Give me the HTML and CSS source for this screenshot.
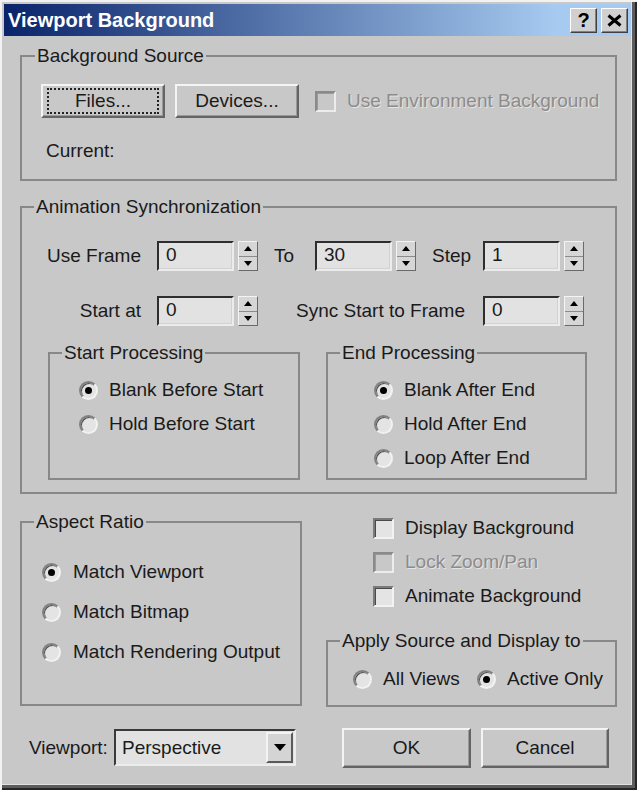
FILE: index.html
```html
<!DOCTYPE html>
<html>
<head>
<meta charset="utf-8">
<title>Viewport Background</title>
<link rel="stylesheet" href="styles.css">
</head>
<body>
<div class="window">
  <div class="titlebar">
    <span class="title">Viewport Background</span>
    <div class="tbtns">
      <span class="tbtn">?</span>
      <span class="tbtn"><svg width="15" height="13" viewBox="0 0 15 13"><path d="M1.5 1.5 L13.5 11.5 M13.5 1.5 L1.5 11.5" stroke="#000" stroke-width="3" fill="none"/></svg></span>
    </div>
  </div>

  <div class="content">
    <fieldset class="grp src">
      <legend class="lg-src">Background Source</legend>
      <div class="srcrow">
        <button class="btn files"><span class="focus">Files...</span></button>
        <button class="btn devices">Devices...</button>
        <div class="chk disabled env"><span class="box"></span><span>Use Environment Background</span></div>
      </div>
      <div class="current">Current:</div>
    </fieldset>

    <fieldset class="grp anim">
      <legend>Animation Synchronization</legend>
      <div class="srow row1">
        <span class="lbl lead">Use Frame</span>
        <div class="edit">0</div>
        <div class="arrows"><span class="up"></span><span class="dn"></span></div>
        <span class="lbl to">To</span>
        <div class="edit">30</div>
        <div class="arrows"><span class="up"></span><span class="dn"></span></div>
        <span class="lbl step">Step</span>
        <div class="edit">1</div>
        <div class="arrows"><span class="up"></span><span class="dn"></span></div>
      </div>
      <div class="srow row2">
        <span class="lbl lead">Start at</span>
        <div class="edit">0</div>
        <div class="arrows"><span class="up"></span><span class="dn"></span></div>
        <span class="lbl sync">Sync Start to Frame</span>
        <div class="edit">0</div>
        <div class="arrows"><span class="up"></span><span class="dn"></span></div>
      </div>
      <div class="procrow">
        <fieldset class="grp proc start">
          <legend>Start Processing</legend>
          <div class="opts">
            <div class="opt"><span class="radio on"></span><span>Blank Before Start</span></div>
            <div class="opt"><span class="radio"></span><span>Hold Before Start</span></div>
          </div>
        </fieldset>
        <fieldset class="grp proc end">
          <legend>End Processing</legend>
          <div class="opts">
            <div class="opt"><span class="radio on"></span><span>Blank After End</span></div>
            <div class="opt"><span class="radio"></span><span>Hold After End</span></div>
            <div class="opt"><span class="radio"></span><span>Loop After End</span></div>
          </div>
        </fieldset>
      </div>
    </fieldset>

    <div class="bottom">
      <div class="leftcol">
        <fieldset class="grp aspect">
          <legend>Aspect Ratio</legend>
          <div class="opts">
            <div class="opt tall"><span class="radio on"></span><span>Match Viewport</span></div>
            <div class="opt tall"><span class="radio"></span><span>Match Bitmap</span></div>
            <div class="opt tall"><span class="radio"></span><span>Match Rendering Output</span></div>
          </div>
        </fieldset>
        <div class="vprow">
          <span class="vplbl">Viewport:</span>
          <div class="combo">
            <span class="val">Perspective</span>
            <span class="ddbtn"><span class="tri"></span></span>
          </div>
        </div>
      </div>
      <div class="rightcol">
        <div class="chks">
          <div class="chk"><span class="box"></span><span>Display Background</span></div>
          <div class="chk disabled"><span class="box"></span><span>Lock Zoom/Pan</span></div>
          <div class="chk"><span class="box"></span><span>Animate Background</span></div>
        </div>
        <fieldset class="grp apply">
          <legend>Apply Source and Display to</legend>
          <div class="applyrow">
            <div class="opt allv"><span class="radio"></span><span>All Views</span></div>
            <div class="opt"><span class="radio on"></span><span>Active Only</span></div>
          </div>
        </fieldset>
        <div class="btnrow">
          <button class="btn ok">OK</button>
          <button class="btn cancel">Cancel</button>
        </div>
      </div>
    </div>
  </div>
</div>
</body>
</html>
```

FILE: styles.css
```css
* { box-sizing: border-box; }

body {
  margin: 0;
  background: #c8c8c8;
  font-family: "Liberation Sans", Arial, sans-serif;
  font-size: 19px;
  line-height: 22px;
  color: #1a1a1a;
}

.window {
  width: 637px;
  height: 790px;
  padding: 4px 6px 6px 4px;
  background: #c8c8c8;
  box-shadow: inset 2px 2px 0 #f2f2f2, inset -2px -2px 0 #262626, inset -5px -5px 0 #5c5c5c, inset -6px -6px 0 #e2e2e2;
}

/* title bar */
.titlebar {
  height: 32px;
  display: flex;
  align-items: center;
  padding: 0 3px 0 4px;
  background: linear-gradient(90deg, #0a246a 0%, #a6caf0 88%, #a6caf0 100%);
}
.title {
  color: #fff;
  font-weight: bold;
  font-size: 20px;
}
.tbtns {
  margin-left: auto;
  display: flex;
  gap: 4px;
}
.tbtn {
  width: 27px;
  height: 25px;
  display: flex;
  align-items: center;
  justify-content: center;
  background: #d0d0d0;
  border: 1px solid;
  border-color: #ffffff #404040 #404040 #ffffff;
  box-shadow: inset -1px -1px 0 #808080;
  font-weight: bold;
  font-size: 20px;
  color: #000;
}

/* content */
.content {
  padding: 0 14px 0 16px;
}

fieldset {
  margin: 0;
  padding: 0;
  min-width: 0;
  border: 2px solid #888888;
}
legend {
  margin-left: 12px;
  padding: 0 2px;
  line-height: 22px;
}
.lg-src { margin-left: 13px; }

/* buttons */
.btn {
  font: inherit;
  color: inherit;
  padding: 0;
  background: #c8c8c8;
  border: 2px solid;
  border-color: #f4f4f4 #646464 #646464 #f4f4f4;
  box-shadow: inset -1px -1px 0 #9a9a9a;
  display: flex;
  align-items: center;
  justify-content: center;
}

/* background source */
.src { margin-top: 9px; padding-bottom: 17px; }
.srcrow {
  display: flex;
  align-items: center;
  margin-top: 17px;
  padding-left: 19px;
}
.files, .devices { width: 124px; height: 34px; }
.devices { margin-left: 10px; }
.files .focus {
  width: 110px;
  height: 24px;
  display: flex;
  align-items: center;
  justify-content: center;
  outline: 2px dotted #222;
  outline-offset: -1px;
}
.env { margin-left: 16px; }
.current {
  margin-top: 22px;
  padding-left: 24px;
}

/* checkbox */
.chk {
  display: flex;
  align-items: center;
  gap: 11px;
  height: 34px;
}
.box {
  flex: none;
  width: 21px;
  height: 21px;
  background: #e4e4e4;
  border: 2px solid;
  border-color: #7a7a7a #f2f2f2 #f2f2f2 #7a7a7a;
  box-shadow: inset 1px 1px 0 #4a4a4a;
}
.disabled { color: #8c8c8c; text-shadow: 1px 1px 0 #e4e4e4; }
.disabled .box {
  background: #c8c8c8;
  border-color: #8a8a8a #ececec #ececec #8a8a8a;
  box-shadow: inset 1px 1px 0 #9a9a9a;
}

/* animation sync */
.anim { margin-top: 15px; padding-bottom: 12px; }
.srow {
  display: flex;
  align-items: center;
  height: 30px;
}
.row1 { margin-top: 23px; }
.row2 { margin-top: 25px; }
.lbl { flex: none; }
.lead { width: 119px; text-align: right; margin-right: 16px; }
.to { width: 57px; padding-left: 16px; }
.step { width: 67px; padding-left: 16px; }
.sync { width: 225px; text-align: right; padding-right: 18px; }

.edit {
  flex: none;
  width: 77px;
  height: 30px;
  padding-left: 7px;
  line-height: 23px;
  background: #e2e2e2;
  border: 2px solid;
  border-color: #2e2e2e #ececec #ececec #2e2e2e;
  box-shadow: inset -1px -1px 0 #d2d2d2;
}
.arrows {
  flex: none;
  width: 20px;
  height: 30px;
  margin-left: 4px;
  display: flex;
  flex-direction: column;
  background: #d6d6d6;
  border: 1px solid;
  border-color: #f4f4f4 #6a6a6a #6a6a6a #f4f4f4;
}
.arrows span {
  flex: 1;
  display: flex;
  align-items: center;
  justify-content: center;
}
.arrows .up { border-bottom: 1px solid #8a8a8a; }
.arrows .up::after {
  content: "";
  border-left: 4px solid transparent;
  border-right: 4px solid transparent;
  border-bottom: 5px solid #000;
}
.arrows .dn::after {
  content: "";
  border-left: 4px solid transparent;
  border-right: 4px solid transparent;
  border-top: 5px solid #000;
}

.procrow {
  display: flex;
  margin-top: 16px;
  padding-left: 26px;
}
.proc.start { width: 252px; }
.proc.end { width: 261px; margin-left: 26px; }
.proc .opts { padding: 9px 0 3px 29px; }
.proc.end .opts { padding-left: 46px; }

.opt {
  display: flex;
  align-items: center;
  gap: 11px;
  height: 34px;
}
.opt.tall { height: 40px; gap: 12px; }

.radio {
  flex: none;
  width: 19px;
  height: 19px;
  border-radius: 50%;
  background: #e4e4e4;
  border: 2px solid;
  border-color: #808080 #f2f2f2 #f2f2f2 #808080;
  box-shadow: inset 1px 1px 0 #505050;
  display: flex;
  align-items: center;
  justify-content: center;
}
.radio.on::after {
  content: "";
  width: 7px;
  height: 7px;
  border-radius: 50%;
  background: #000;
}

/* bottom area */
.bottom {
  display: flex;
  margin-top: 17px;
}
.leftcol { width: 282px; flex: none; }
.rightcol { width: 291px; flex: none; margin-left: 24px; }

.aspect .opts { padding: 19px 0 32px 20px; }

.vprow {
  display: flex;
  align-items: center;
  height: 37px;
  margin-top: 23px;
  padding-left: 9px;
}
.vplbl { width: 85px; flex: none; }
.combo {
  width: 182px;
  height: 37px;
  display: flex;
  align-items: center;
  padding-left: 6px;
  background: #e2e2e2;
  border: 2px solid;
  border-color: #3a3a3a #ececec #ececec #3a3a3a;
}
.combo .val { flex: 1; }
.ddbtn {
  width: 27px;
  height: 31px;
  margin-right: 1px;
  display: flex;
  align-items: center;
  justify-content: center;
  background: #d4d4d4;
  border: 2px solid;
  border-color: #f4f4f4 #5a5a5a #5a5a5a #f4f4f4;
}
.tri {
  border-left: 6px solid transparent;
  border-right: 6px solid transparent;
  border-top: 7px solid #000;
}

.chks { padding-left: 47px; }
.apply { margin-top: 17px; padding-bottom: 9px; }
.applyrow {
  display: flex;
  margin-top: 10px;
  padding-left: 25px;
}
.allv { width: 124px; }

.btnrow {
  display: flex;
  margin-top: 21px;
  padding-left: 16px;
}
.ok { width: 129px; height: 40px; }
.cancel { width: 128px; height: 40px; margin-left: 10px; }
```
